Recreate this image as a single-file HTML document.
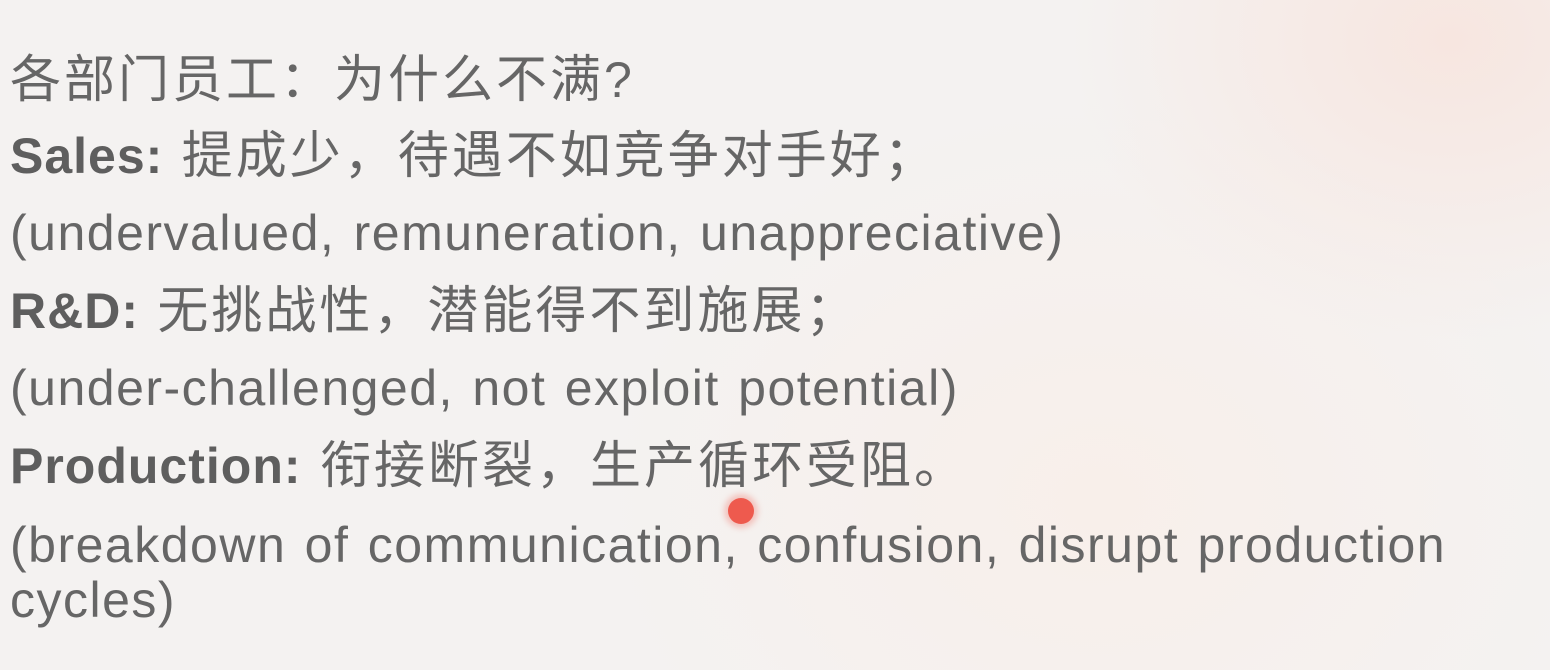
<!DOCTYPE html>
<html><head><meta charset="utf-8"><style>
html,body{margin:0;padding:0}
body{width:1550px;height:670px;overflow:hidden;position:relative;
background:radial-gradient(ellipse 380px 300px at 1450px 40px,#f7e6e0 0%,rgba(246,235,230,0) 100%),
radial-gradient(ellipse 500px 400px at 1100px 500px,#f8efea 0%,rgba(248,240,236,0) 100%),#f4f2f1;
font-family:"Liberation Sans","Noto Sans CJK SC",sans-serif;color:#666;font-size:50px;letter-spacing:1.5px;word-spacing:3px}
.l{position:absolute;left:10px;white-space:nowrap;line-height:56px;height:56px}
.c{font-family:"Noto Sans CJK SC",sans-serif;font-size:51px;letter-spacing:3px}
b{font-weight:bold;color:#5e5e5e;letter-spacing:1px}
.dot{position:absolute;left:728px;top:498px;width:26px;height:26px;border-radius:50%;background:#ee5a4e;box-shadow:0 0 6px 4px rgba(240,140,130,.45)}
</style></head><body>
<div class="l" style="top:47px"><span class="c">各部门员工：为什么不满</span>?</div>
<div class="l" style="top:123px"><b>Sales:</b> <span class="c">提成少，待遇不如竞争对手好；</span></div>
<div class="l" style="top:205px">(undervalued, remuneration, unappreciative)</div>
<div class="l" style="top:278px"><b>R&amp;D:</b> <span class="c">无挑战性，潜能得不到施展；</span></div>
<div class="l" style="top:360px">(under-challenged, not exploit potential)</div>
<div class="l" style="top:433px"><b>Production:</b> <span class="c">衔接断裂，生产循环受阻。</span></div>
<div class="l" style="top:517px">(breakdown of communication, confusion, disrupt production</div>
<div class="l" style="top:572px">cycles)</div>
<div class="dot"></div>
</body></html>
